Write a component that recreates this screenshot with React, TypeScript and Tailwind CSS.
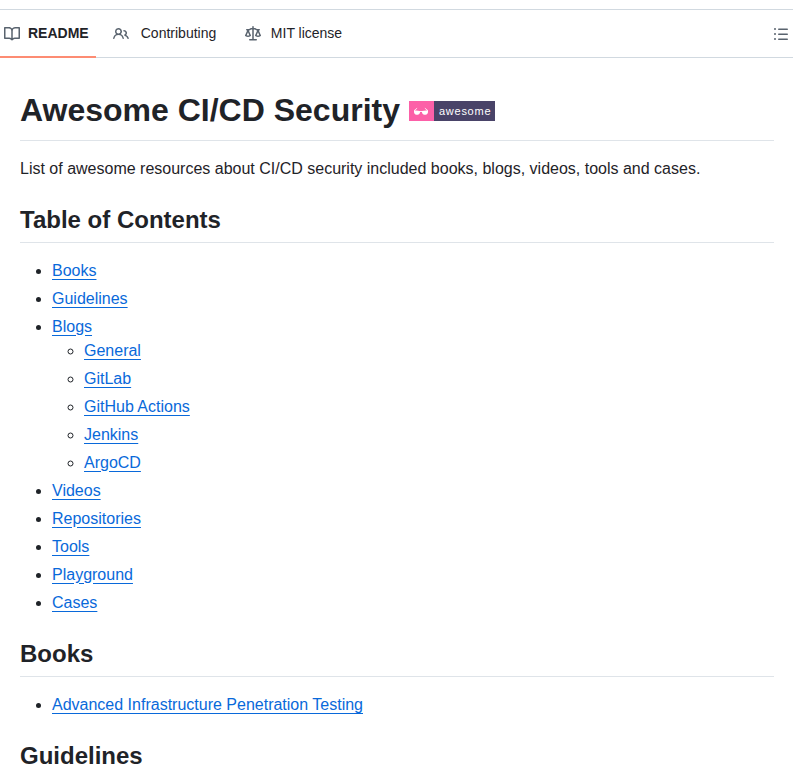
import type { ReactNode } from "react";

const icons = {
  book: "M0 1.75A.75.75 0 0 1 .75 1h4.253c1.227 0 2.317.59 3 1.501A3.743 3.743 0 0 1 11.006 1h4.245a.75.75 0 0 1 .75.75v10.5a.75.75 0 0 1-.75.75h-4.507a2.25 2.25 0 0 0-1.591.659l-.622.621a.75.75 0 0 1-1.06 0l-.622-.621A2.25 2.25 0 0 0 5.258 13H.75a.75.75 0 0 1-.75-.75Zm7.251 10.324.004-5.073-.002-2.253A2.25 2.25 0 0 0 5.003 2.5H1.5v9h3.757a3.75 3.75 0 0 1 1.994.574ZM8.755 4.75l-.004 7.322a3.752 3.752 0 0 1 1.992-.572H14.5v-9h-3.495a2.25 2.25 0 0 0-2.25 2.25Z",
  people:
    "M2 5.5a3.5 3.5 0 1 1 5.898 2.549 5.508 5.508 0 0 1 3.034 4.084.75.75 0 1 1-1.482.235 4 4 0 0 0-7.9 0 .75.75 0 0 1-1.482-.236A5.507 5.507 0 0 1 3.102 8.05 3.493 3.493 0 0 1 2 5.5ZM11 4a3.001 3.001 0 0 1 2.22 5.018 5.01 5.01 0 0 1 2.56 3.012.749.749 0 0 1-.885.954.752.752 0 0 1-.549-.514 3.507 3.507 0 0 0-2.522-2.372.75.75 0 0 1-.574-.73v-.352a.75.75 0 0 1 .416-.672A1.5 1.5 0 0 0 11 5.5.75.75 0 0 1 11 4Zm-5.5-.5a2 2 0 1 0-.001 3.999A2 2 0 0 0 5.5 3.5Z",
  law: "M8.75.75V2h.985c.304 0 .603.08.867.231l1.29.736c.038.022.08.033.124.033h2.234a.75.75 0 0 1 0 1.5h-.427l2.111 4.692a.75.75 0 0 1-.154.838l-.53-.53.529.531-.001.002-.002.002-.006.006-.006.005-.01.01-.045.04c-.21.176-.441.327-.686.45C14.556 10.78 13.88 11 13 11a4.498 4.498 0 0 1-2.023-.454 3.544 3.544 0 0 1-.686-.45l-.045-.04-.016-.015-.006-.006-.004-.004v-.001a.75.75 0 0 1-.154-.838L12.178 4.5h-.162c-.305 0-.604-.079-.868-.231l-1.29-.736a.245.245 0 0 0-.124-.033H8.75V13h2.5a.75.75 0 0 1 0 1.5h-6.5a.75.75 0 0 1 0-1.5h2.5V3.5h-.984a.245.245 0 0 0-.124.033l-1.289.737c-.265.15-.564.23-.869.23h-.162l2.112 4.692a.75.75 0 0 1-.154.838l-.53-.53.529.531-.001.002-.002.002-.006.006-.016.015-.045.04c-.21.176-.441.327-.686.45C4.556 10.78 3.88 11 3 11a4.498 4.498 0 0 1-2.023-.454 3.544 3.544 0 0 1-.686-.45l-.045-.04-.016-.015-.006-.006-.004-.004v-.001a.75.75 0 0 1-.154-.838L2.178 4.5H1.75a.75.75 0 0 1 0-1.5h2.234a.249.249 0 0 0 .125-.033l1.288-.737c.265-.15.564-.23.869-.23h.984V.75a.75.75 0 0 1 1.5 0Zm2.945 8.477c.285.135.718.273 1.305.273s1.02-.138 1.305-.273L13 6.327Zm-10 0c.285.135.718.273 1.305.273s1.02-.138 1.305-.273L3 6.327Z",
  list: "M5.75 2.5h8.5a.75.75 0 0 1 0 1.5h-8.5a.75.75 0 0 1 0-1.5Zm0 5h8.5a.75.75 0 0 1 0 1.5h-8.5a.75.75 0 0 1 0-1.5Zm0 5h8.5a.75.75 0 0 1 0 1.5h-8.5a.75.75 0 0 1 0-1.5ZM2 14a1 1 0 1 1 0-2 1 1 0 0 1 0 2Zm1-6a1 1 0 1 1-2 0 1 1 0 0 1 2 0ZM2 4a1 1 0 1 1 0-2 1 1 0 0 1 0 2Z",
};

function Icon({ name }: { name: keyof typeof icons }) {
  return (
    <svg width="16" height="16" viewBox="0 0 16 16" className="shrink-0 fill-[#59636e]">
      <path d={icons[name]} />
    </svg>
  );
}

function Link({ children }: { children: ReactNode }) {
  return (
    <a href="#" className="text-[#0969da] underline underline-offset-[3.2px]">
      {children}
    </a>
  );
}

function Heading({ children }: { children: ReactNode }) {
  return (
    <h2 className="mt-6 mb-4 border-b border-[#d1d9e0b3] pb-[7.2px] text-2xl leading-[30px] font-semibold">
      {children}
    </h2>
  );
}

function AwesomeBadge() {
  return (
    <svg width="86" height="20" viewBox="0 0 86 20" className="inline-block align-baseline">
      <rect width="25" height="20" fill="#fc60a8" />
      <rect x="25" width="61" height="20" fill="#494368" />
      <path
        d="M5 9.2l6 .7c.4 0 .6.1.8.300h.4c.2-.2.400-.3.800-.3l6-.7v1.600c0 1.700-.9 2.900-2.500 2.900h-1c-1.500 0-2.400-1-2.600-2.600h-1.800c-.2 1.600-1.100 2.600-2.600 2.600h-1C5.900 13.700 5 12.500 5 10.800z"
        fill="#fff"
      />
      <path d="M5.200 9.500 8.100 7.200M18.800 9.500 15.900 7.200" stroke="#fff" strokeWidth=".8" />
      <text x="30" y="14" fill="#fff" textLength="51.5" className="text-[11px] font-normal">
        awesome
      </text>
    </svg>
  );
}

const blogs = ["General", "GitLab", "GitHub Actions", "Jenkins", "ArgoCD"];
const contents = ["Books", "Guidelines", "Blogs", "Videos", "Repositories", "Tools", "Playground", "Cases"];

export default function App() {
  return (
    <div className="h-[770px] overflow-hidden bg-white pt-[9px] font-['Liberation_Sans',Arial,sans-serif] text-base text-[#1f2328]">
      <nav className="flex h-[49px] items-stretch border-y border-[#d1d9e0] text-sm leading-[21px]">
        <div className="-mb-px flex w-24 items-center gap-2 border-b-2 border-[#fd8c73] pl-1 font-semibold">
          <span className="pt-px">
            <Icon name="book" />
          </span>
          <span>README</span>
        </div>
        <div className="ml-[17px] flex items-center gap-2">
          <Icon name="people" />
          <span className="w-[83px] text-center">Contributing</span>
        </div>
        <div className="ml-[25px] flex items-center gap-2">
          <Icon name="law" />
          <span className="w-[75px] text-center">MIT license</span>
        </div>
        <div className="ml-auto flex items-center pr-1">
          <Icon name="list" />
        </div>
      </nav>

      <article className="pt-8 pr-[19px] pl-5 leading-6">
        <h1 className="mb-4 border-b border-[#d1d9e0b3] pb-[9.6px] text-[32px] leading-10 font-semibold">
          Awesome CI/CD Security <AwesomeBadge />
        </h1>
        <p>List of awesome resources about CI/CD security included books, blogs, videos, tools and cases.</p>

        <Heading>Table of Contents</Heading>
        <ul className="list-disc space-y-1 pl-8">
          {contents.map((item) => (
            <li key={item}>
              <Link>{item}</Link>
              {item === "Blogs" && (
                <ul className="list-[circle] space-y-1 pl-8">
                  {blogs.map((blog) => (
                    <li key={blog}>
                      <Link>{blog}</Link>
                    </li>
                  ))}
                </ul>
              )}
            </li>
          ))}
        </ul>

        <Heading>Books</Heading>
        <ul className="list-disc pl-8">
          <li>
            <Link>Advanced Infrastructure Penetration Testing</Link>
          </li>
        </ul>

        <Heading>Guidelines</Heading>
      </article>
    </div>
  );
}
